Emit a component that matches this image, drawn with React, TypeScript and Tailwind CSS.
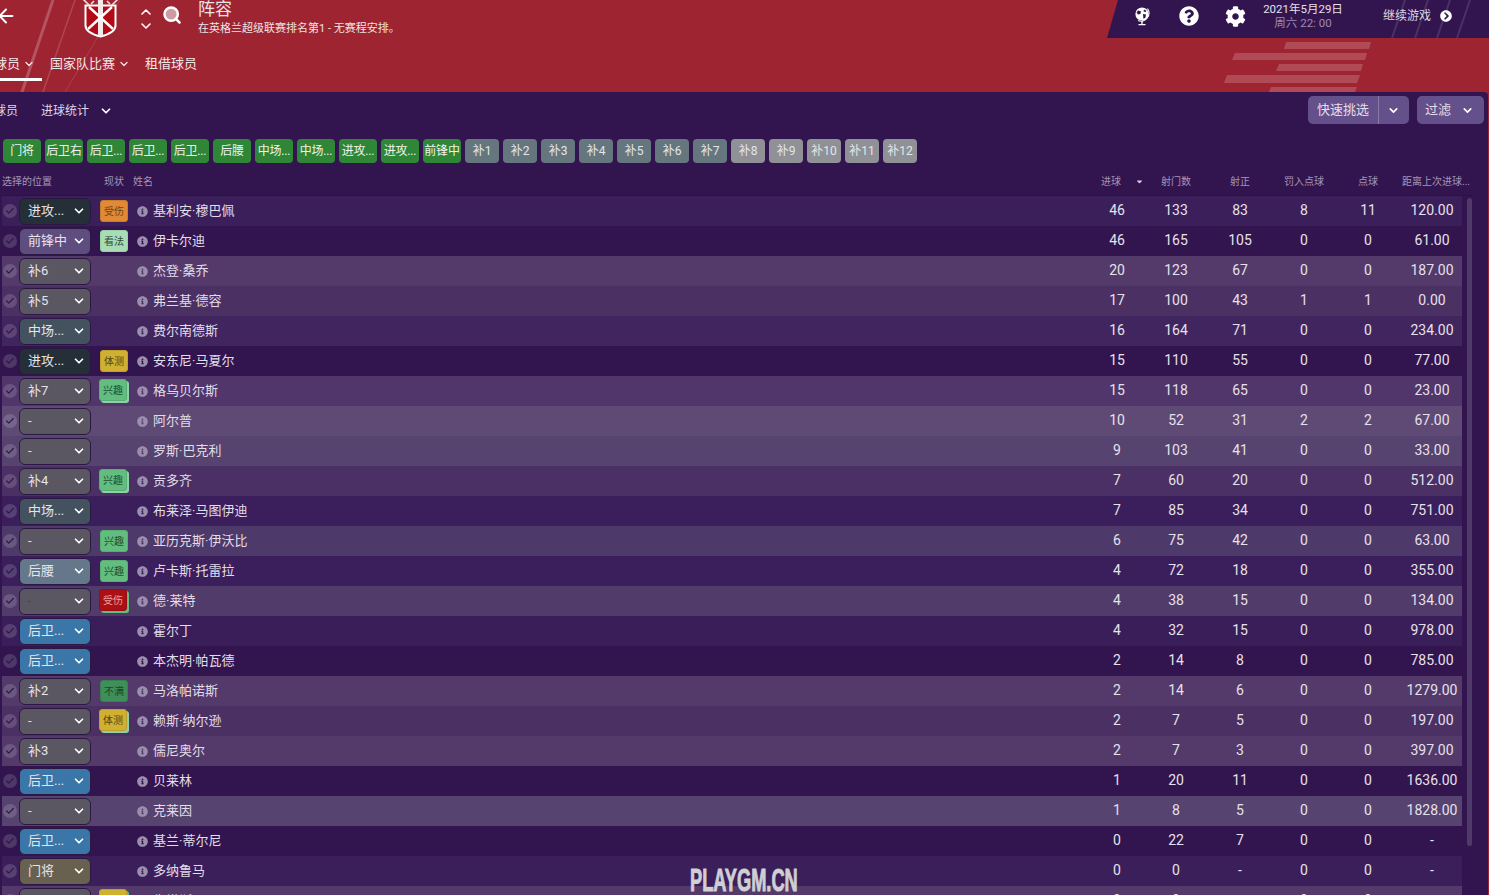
import { ArrowLeft, ChevronDown, ChevronUp, Search, Check } from "lucide-react"
import { FaQuestionCircle, FaCog, FaChevronCircleRight, FaInfoCircle, FaCaretDown } from "react-icons/fa"

const selectColors: Record<string, string> = {
    attack: "bg-[#252f38]",
    striker: "bg-[#5f4d80]",
    sub: "bg-[#5a5763]",
    mid: "bg-[#44525f]",
    dm: "bg-[#65778a]",
    back: "bg-[#3a76a8]",
    gk: "bg-[#696150]",
}

const badges: Record<string, string> = {
    受伤: "bg-[#e08a35] text-[#6e4219] border-[#c97a2e]",
    看法: "bg-[#a7dcb4] text-[#2f4a38] border-[#97cfa6]",
    体测: "bg-[#cfb032] text-[#55470f] border-[#bda02c]",
    兴趣: "bg-[#62bd7f] text-[#1c5230] border-[#58ad73]",
    不满: "bg-[#3f8f5a] text-[#1b4729] border-[#38804f]",
    红伤: "bg-[#ad1014] text-[#eba0a0] border-[#980d11]",
}

type Row = {
    sel: string; kind: string; badge?: string; stack?: string; name: string; bg: string
    v: string[]; red?: boolean
}

const rows: Row[] = [
    { sel: "进攻...", kind: "attack", badge: "受伤", name: "基利安·穆巴佩", bg: "bg-[#3b1f5b]", v: ["46", "133", "83", "8", "11", "120.00"] },
    { sel: "前锋中", kind: "striker", badge: "看法", name: "伊卡尔迪", bg: "bg-[#32154f]", v: ["46", "165", "105", "0", "0", "61.00"] },
    { sel: "补6", kind: "sub", name: "杰登·桑乔", bg: "bg-[#533a6a]", v: ["20", "123", "67", "0", "0", "187.00"] },
    { sel: "补5", kind: "sub", name: "弗兰基·德容", bg: "bg-[#4b3064]", v: ["17", "100", "43", "1", "1", "0.00"] },
    { sel: "中场...", kind: "mid", name: "费尔南德斯", bg: "bg-[#40255f]", v: ["16", "164", "71", "0", "0", "234.00"] },
    { sel: "进攻...", kind: "attack", badge: "体测", name: "安东尼·马夏尔", bg: "bg-[#32154f]", v: ["15", "110", "55", "0", "0", "77.00"] },
    { sel: "补7", kind: "sub", badge: "兴趣", stack: "bg-[#8fd0a6]", name: "格乌贝尔斯", bg: "bg-[#50366b]", v: ["15", "118", "65", "0", "0", "23.00"] },
    { sel: "-", kind: "sub", name: "阿尔普", bg: "bg-[#5f4a76]", v: ["10", "52", "31", "2", "2", "67.00"] },
    { sel: "-", kind: "sub", name: "罗斯·巴克利", bg: "bg-[#574370]", v: ["9", "103", "41", "0", "0", "33.00"] },
    { sel: "补4", kind: "sub", badge: "兴趣", stack: "bg-[#8fd0a6]", name: "贡多齐", bg: "bg-[#4a3065]", v: ["7", "60", "20", "0", "0", "512.00"] },
    { sel: "中场...", kind: "mid", name: "布莱泽·马图伊迪", bg: "bg-[#3a1f5c]", v: ["7", "85", "34", "0", "0", "751.00"] },
    { sel: "-", kind: "sub", badge: "兴趣", name: "亚历克斯·伊沃比", bg: "bg-[#4e3a6a]", v: ["6", "75", "42", "0", "0", "63.00"] },
    { sel: "后腰", kind: "dm", badge: "兴趣", name: "卢卡斯·托雷拉", bg: "bg-[#3a1f5c]", v: ["4", "72", "18", "0", "0", "355.00"] },
    { sel: "-", kind: "sub", red: true, badge: "红伤", stack: "bg-[#62bd7f]", name: "德·莱特", bg: "bg-[#513b6b]", v: ["4", "38", "15", "0", "0", "134.00"] },
    { sel: "后卫...", kind: "back", name: "霍尔丁", bg: "bg-[#3a1e5a]", v: ["4", "32", "15", "0", "0", "978.00"] },
    { sel: "后卫...", kind: "back", name: "本杰明·帕瓦德", bg: "bg-[#32154f]", v: ["2", "14", "8", "0", "0", "785.00"] },
    { sel: "补2", kind: "sub", badge: "不满", name: "马洛帕诺斯", bg: "bg-[#533a6a]", v: ["2", "14", "6", "0", "0", "1279.00"] },
    { sel: "-", kind: "sub", badge: "体测", stack: "bg-[#8fd0a6]", name: "赖斯·纳尔逊", bg: "bg-[#4b3064]", v: ["2", "7", "5", "0", "0", "197.00"] },
    { sel: "补3", kind: "sub", name: "儒尼奥尔", bg: "bg-[#533a6a]", v: ["2", "7", "3", "0", "0", "397.00"] },
    { sel: "后卫...", kind: "back", name: "贝莱林", bg: "bg-[#32154f]", v: ["1", "20", "11", "0", "0", "1636.00"] },
    { sel: "-", kind: "sub", name: "克莱因", bg: "bg-[#574370]", v: ["1", "8", "5", "0", "0", "1828.00"] },
    { sel: "后卫...", kind: "back", name: "基兰·蒂尔尼", bg: "bg-[#32154f]", v: ["0", "22", "7", "0", "0", "-"] },
    { sel: "门将", kind: "gk", name: "多纳鲁马", bg: "bg-[#3b1f5b]", v: ["0", "0", "-", "0", "0", "-"] },
    { sel: "-", kind: "sub", badge: "体测", stack: "bg-[#62bd7f]", name: "朱塔斯", bg: "bg-[#533a6a]", v: ["0", "0", "-", "0", "0", "-"] },
]

const greenChips = ["门将", "后卫右", "后卫...", "后卫...", "后卫...", "后腰", "中场...", "中场...", "进攻...", "进攻...", "前锋中"]
const subChips = ["补1", "补2", "补3", "补4", "补5", "补6", "补7", "补8", "补9", "补10", "补11", "补12"]

const colWidths = ["w-[54px]", "w-[64px]", "w-[64px]", "w-[64px]", "w-[64px]", "w-[62px] pl-[2px]"]
const colLabels = ["进球", "射门数", "射正", "罚入点球", "点球", "距离上次进球..."]

function Globe() {
    return (
        <svg width="20" height="21" viewBox="0 0 20 21" className="text-white">
            <circle cx="10" cy="8" r="6.6" fill="currentColor" />
            <path d="M6 4.5l3 .8-.6 2.6-2.4.6-1.4-2zM11 8l3 .6-.6 3.2-2 1zM12 3.5l2.4 1.2-.8 1.4-2-.6z" fill="#32154f" />
            <path d="M15.5 2.5a8 8 0 0 1-9.5 12" fill="none" stroke="currentColor" strokeWidth="1.1" />
            <path d="M10 15v3M6.5 18.6h7" stroke="currentColor" strokeWidth="1.4" fill="none" />
        </svg>
    )
}

function Crest() {
    return (
        <svg width="35" height="38" viewBox="0 0 35 38">
            <path d="M2.5 5.5h30v20c0 6-7 9-15 11-8-2-15-5-15-11z" fill="#b00b16" stroke="#fff" strokeWidth="2" />
            <path d="M15 0h5v36h-5z" fill="#f1e9ea" />
            <path d="M5 29L29 7M6 7l24 22" stroke="#fff" strokeWidth="2.4" />
            <path d="M0-1l6 6M35-1l-6 6M8 4l3-3M27 4l-3-3" stroke="#e9dcdd" strokeWidth="1.6" />
        </svg>
    )
}

function Stat({ item }: { item: Row }) {
    return (
        <div className={`flex items-center h-[30px] w-[1460px] ${item.bg}`}>
            <div className="w-[14px] h-[14px] ml-[1px] rounded-full bg-white/15 flex items-center justify-center text-[#2f1a4b]">
                <Check size={10} strokeWidth={3} />
            </div>
            <div className={`ml-[2px] w-[72px] h-[27px] flex items-center justify-between pl-[8px] pr-[4px] rounded-[6px] border border-[#2b1842] ${selectColors[item.kind]}`}>
                <span className={`text-[13px] ${item.red ? "text-[#c0141c]" : "text-[#e6e3ea]"}`}>{item.sel}</span>
                <ChevronDown size={14} strokeWidth={3} className="text-white" />
            </div>
            <div className="ml-[8px] w-[30px] h-[22px] relative">
                {item.stack && <div className={`absolute left-[2px] top-[1px] w-[28px] h-[22px] rounded-[3px] ${item.stack}`} />}
                {item.badge && (
                    <div className={`absolute ${item.stack ? "left-0 top-[-1px]" : "left-[1px] top-0"} w-[28px] h-[22px] rounded-[3px] border flex items-center justify-center text-[10px] ${badges[item.badge]}`}>
                        {item.badge === "红伤" ? "受伤" : item.badge}
                    </div>
                )}
            </div>
            <FaInfoCircle size={11} className="ml-[8px] text-[#9c8eae]" />
            <span className="ml-[5px] text-[13px] text-[#e2dde8] flex-1">{item.name}</span>
            {item.v.map((val, i) => (
                <span key={i} className={`${colWidths[i]} text-center text-[14px] text-[#e6e1ea] pb-[1px]`}>{val}</span>
            ))}
        </div>
    )
}

function App() {
    return (
        <div className="w-[1489px] h-[895px] overflow-hidden relative bg-[#9f2431] font-['Roboto','Noto_Sans_CJK_SC',sans-serif]">
            <svg width="1489" height="92" className="absolute left-0 top-0">
                <path d="M53 0L22 92" stroke="#ffffff" strokeOpacity="0.22" strokeWidth="3" />
                <path d="M75 0L43 92" stroke="#ffffff" strokeOpacity="0.16" strokeWidth="1.5" />
                <path d="M120 0L65 92" stroke="#ffffff" strokeOpacity="0.13" strokeWidth="1" />
                <path d="M98 0L88 30" stroke="#ffffff" strokeOpacity="0.13" strokeWidth="1" />
                <path d="M1286 42h85l-2 7h-85zM1235 53h132l-2 7h-133zM1279 64h84l-2 7h-85zM1227 75h133l-3 8h-133zM1271 87h86l-2 5h-86z" fill="#ffffff" fillOpacity="0.18" />
            </svg>

            {/* top bar */}
            <div className="relative h-[50px] flex items-start">
                <ArrowLeft size={22} strokeWidth={2.2} className="text-white ml-[-5px] mt-[5px]" />
                <div className="ml-[66px]"><Crest /></div>
                <div className="ml-[20px] mt-[4px] flex flex-col items-center text-white">
                    <ChevronUp size={16} strokeWidth={2.4} />
                    <ChevronDown size={16} strokeWidth={2.4} className="-mt-[2px]" />
                </div>
                <div className="ml-[8px] mt-[5px] text-white">
                    <Search size={20} strokeWidth={3} fill="#cf9aa2" />
                </div>
                <div className="ml-[16px] -mt-[3px] text-[#ece3e5]">
                    <div className="text-[17px] leading-[24px]">阵容</div>
                    <div className="text-[11px] leading-[14px] mt-[1px]">在英格兰超级联赛排名第1 - 无赛程安排。</div>
                </div>
                <div className="ml-auto w-[382px] h-[38px] relative bg-[#32154f] flex items-center pb-[6px] [clip-path:polygon(11px_0,100%_0,100%_100%,0_100%)]">
                    <svg width="382" height="38" className="absolute left-0 top-0">
                        <path d="M285 38L298 0M308 38L321 0M330 38L343 0M350 38L363 0" stroke="#ffffff" strokeOpacity="0.12" strokeWidth="2" />
                    </svg>
                    <div className="relative flex items-center w-full text-white">
                        <div className="ml-[25px]"><Globe /></div>
                        <FaQuestionCircle size={20} className="ml-[27px]" />
                        <FaCog size={21} className="ml-[26px]" />
                        <div className="ml-[17px] w-[80px] text-center whitespace-nowrap">
                            <div className="text-[11.5px] leading-[14px] text-[#e6e1ea]">2021年5月29日</div>
                            <div className="text-[11.5px] leading-[14px] text-[#9d8bb0]">周六 22: 00</div>
                        </div>
                        <span className="ml-[40px] text-[12px] text-[#ddd7e3]">继续游戏</span>
                        <FaChevronCircleRight size={12} className="ml-[9px]" />
                    </div>
                </div>
            </div>

            {/* tabs */}
            <div className="relative h-[42px] flex items-start text-[13px] text-[#f0e6e8]">
                <div className="ml-[-7px] w-[49px] h-[31px] border-b-[3px] border-white flex items-center gap-[3px] pl-[1px]">
                    球员 <ChevronDown size={12} strokeWidth={2.6} />
                </div>
                <div className="ml-[8px] h-[28px] flex items-center gap-[3px]">
                    国家队比赛 <ChevronDown size={12} strokeWidth={2.6} />
                </div>
                <div className="ml-[15px] h-[28px] flex items-center">租借球员</div>
            </div>

            {/* main panel */}
            <div className="relative w-[1488px] h-[803px] bg-[#32154f] rounded-tr-[4px] overflow-hidden">
                <div className="h-[38px] flex items-start text-[12px] text-[#ded8e4]">
                    <span className="ml-[-6px] mt-[10px]">球员</span>
                    <span className="ml-[23px] mt-[10px]">进球统计</span>
                    <ChevronDown size={14} strokeWidth={3} className="ml-[10px] mt-[12px] text-white" />
                    <div className="ml-auto mt-[4px] flex h-[28px] w-[101px] rounded-[5px] bg-[#64508a] items-center text-[13px] text-[#e4deeb]">
                        <span className="w-[71px] text-center border-r border-[#8a78a8] h-full flex items-center justify-center">快速挑选</span>
                        <ChevronDown size={13} strokeWidth={3} className="ml-[8px] text-white" />
                    </div>
                    <div className="ml-[8px] mr-[4px] mt-[4px] flex h-[28px] w-[67px] rounded-[5px] bg-[#64508a] items-center justify-between pl-[8px] pr-[10px] text-[13px] text-[#e4deeb]">
                        过滤 <ChevronDown size={13} strokeWidth={3} className="text-white" />
                    </div>
                </div>

                {/* position chips */}
                <div className="mt-[9px] ml-[3px] flex gap-[4px] h-[24px]">
                    {greenChips.map((c, i) => (
                        <div key={i} className="w-[38px] rounded-[4px] bg-[#2e8636] flex items-center justify-center text-[12px] tracking-[-0.2px] text-[#eef3ee] whitespace-nowrap">{c}</div>
                    ))}
                    {subChips.map((c, i) => (
                        <div key={i} className={`w-[34px] rounded-[4px] flex items-center justify-center text-[12px] text-[#e3e6e8] ${i < 7 ? "bg-[#66767f]" : "bg-[#8f9196]"}`}>{c}</div>
                    ))}
                </div>

                {/* table header */}
                <div className="mt-[7px] ml-[2px] w-[1472px] h-[26px] flex items-center pb-[2px] text-[10px] text-[#a595b8] border-b border-[#2a1045]">
                    <span className="w-[102px]">选择的位置</span>
                    <span className="w-[29px]">现状</span>
                    <span className="flex-1">姓名</span>
                    <div className="flex w-[372px] mr-[12px]">
                        {colLabels.map((l, i) => (
                            <span key={i} className={`${colWidths[i]} text-center relative whitespace-nowrap ${i === 0 ? "pr-[12px]" : ""}`}>
                                {l}
                                {i === 0 && <FaCaretDown size={9} className="absolute left-[45px] top-[3px] text-[#d8d0e0]" />}
                            </span>
                        ))}
                    </div>
                </div>

                {/* rows */}
                <div className="ml-[2px] flex flex-col">
                    {rows.map((item, i) => <Stat key={i} item={item} />)}
                </div>

                {/* scrollbar */}
                <div className="absolute left-[1467px] top-[106px] w-[5px] h-[648px] rounded-full bg-[#4f3a6a]" />
            </div>

            <div className="absolute left-[690px] top-[863px] text-[32px] leading-[34px] font-bold text-[#cfcfd4] [-webkit-text-stroke:1px_#cfcfd4] font-['Liberation_Sans',sans-serif] scale-x-[0.57] origin-left whitespace-nowrap">PLAYGM.CN</div>
        </div>
    )
}

export default App
